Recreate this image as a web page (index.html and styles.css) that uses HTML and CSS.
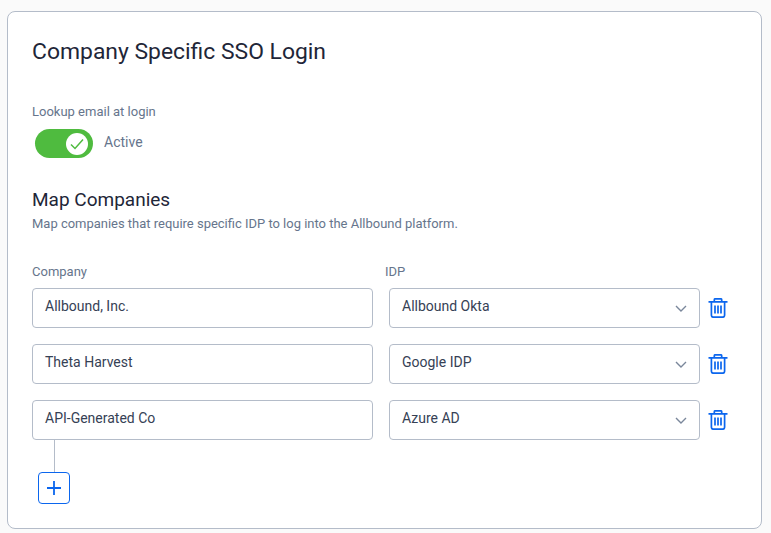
FILE: index.html
```html
<!DOCTYPE html>
<html lang="en">
<head>
<meta charset="utf-8">
<title>Company Specific SSO Login</title>
<link rel="stylesheet" href="styles.css">
</head>
<body>
<svg class="defs" width="0" height="0" aria-hidden="true">
  <symbol id="trash" viewBox="0 0 20 20">
    <path d="M0.5 3.8H19.5M6.3 3.5V1.8a1 1 0 0 1 1-1h5.4a1 1 0 0 1 1 1V3.5M3.4 4V17.2a2 2 0 0 0 2 2H14.6a2 2 0 0 0 2-2V4" fill="none" stroke="currentColor" stroke-width="1.7"/>
    <path d="M7 7.5V15.5M10 7.5V15.5M13 7.5V15.5" fill="none" stroke="currentColor" stroke-width="1.7"/>
  </symbol>
  <symbol id="chev" viewBox="0 0 12 7">
    <path d="M1 1L6 6L11 1" fill="none" stroke="currentColor" stroke-width="1.4"/>
  </symbol>
</svg>
<main class="card">
  <h1 class="title">Company Specific SSO Login</h1>
  <div class="field-label">Lookup email at login</div>
  <div class="toggle-row">
    <span class="toggle">
      <span class="knob">
        <svg width="14" height="12" viewBox="0 0 14 12"><path d="M1 6.5L5 10.5L13 1.5" fill="none" stroke="#4fbb3f" stroke-width="1.5"/></svg>
      </span>
    </span>
    <span class="toggle-text">Active</span>
  </div>
  <h2 class="subtitle">Map Companies</h2>
  <p class="desc">Map companies that require specific IDP to log into the Allbound platform.</p>
  <div class="col-labels">
    <span>Company</span>
    <span>IDP</span>
  </div>
  <div class="rows">
    <div class="row">
      <div class="box">Allbound, Inc.</div>
      <div class="box select">Allbound Okta<svg class="chev" width="12" height="7"><use href="#chev"/></svg></div>
      <svg class="trash" width="20" height="20"><use href="#trash"/></svg>
    </div>
    <div class="row">
      <div class="box">Theta Harvest</div>
      <div class="box select">Google IDP<svg class="chev" width="12" height="7"><use href="#chev"/></svg></div>
      <svg class="trash" width="20" height="20"><use href="#trash"/></svg>
    </div>
    <div class="row">
      <div class="box">API-Generated Co</div>
      <div class="box select">Azure AD<svg class="chev" width="12" height="7"><use href="#chev"/></svg></div>
      <svg class="trash" width="20" height="20"><use href="#trash"/></svg>
    </div>
  </div>
  <div class="connector"></div>
  <button class="add" type="button" aria-label="Add">
    <svg width="16" height="16" viewBox="0 0 16 16"><path d="M8 1V15M1 8H15" fill="none" stroke="currentColor" stroke-width="1.8"/></svg>
  </button>
</main>
</body>
</html>
```
FILE: styles.css
```css
* { box-sizing: border-box; }
html, body { margin: 0; height: 533px; overflow: hidden; }
body {
  background: #fafafa;
  padding: 11px 9px 4px 7px;
  font-family: Roboto, "Liberation Sans", sans-serif;
  color: #20293a;
}
.defs { position: absolute; }
.card {
  height: 518px;
  background: #fff;
  border: 1px solid #b4bcc9;
  border-radius: 8px;
  padding: 24px;
}
.title {
  margin: 0;
  font-size: 22.9px;
  font-weight: 400;
  line-height: 32px;
  color: #1e2638;
}
.field-label {
  margin-top: 35px;
  font-size: 13px;
  line-height: 18px;
  color: #66758c;
}
.toggle-row {
  display: flex;
  align-items: center;
  margin-top: 8px;
  margin-left: 3px;
}
.toggle {
  display: flex;
  align-items: center;
  justify-content: flex-end;
  width: 58px;
  height: 29px;
  padding-right: 5px;
  background: #4fbb3f;
  border-radius: 15px;
}
.knob {
  display: flex;
  align-items: center;
  justify-content: center;
  width: 22px;
  height: 22px;
  background: #fff;
  border-radius: 50%;
}
.toggle-text {
  margin-left: 11px;
  font-size: 14px;
  line-height: 18px;
  color: #66758c;
  position: relative;
  top: -2px;
}
.subtitle {
  margin: 30px 0 0;
  font-size: 19px;
  font-weight: 400;
  line-height: 24px;
  color: #1e2638;
}
.desc {
  margin: 3px 0 0;
  font-size: 12.97px;
  line-height: 18px;
  color: #66758c;
}
.col-labels {
  display: grid;
  grid-template-columns: 353px 1fr;
  margin-top: 30px;
  font-size: 13px;
  line-height: 18px;
  color: #66758c;
}
.rows {
  display: flex;
  flex-direction: column;
  gap: 16px;
  margin-top: 7px;
}
.row {
  display: grid;
  grid-template-columns: 341px 311px 20px;
  column-gap: 16px;
  align-items: center;
}
.row .trash { margin-left: -8px; color: #0b66ee; }
.box {
  display: flex;
  align-items: center;
  justify-content: space-between;
  height: 40px;
  padding: 0 12px 4px 12px;
  border: 1px solid #b4bcc9;
  border-radius: 4px;
  font-size: 14px;
  color: #364155;
  background: #fff;
}
.chev { color: #7a879b; margin-top: 4px; }
.connector {
  width: 1px;
  height: 32px;
  margin-left: 22px;
  background: #b4bcc9;
}
.add {
  display: flex;
  align-items: center;
  justify-content: center;
  width: 32px;
  height: 32px;
  margin-left: 6px;
  padding: 0;
  background: #fff;
  border: 1px solid #0b66ee;
  border-radius: 4px;
  color: #0b66ee;
}
```
